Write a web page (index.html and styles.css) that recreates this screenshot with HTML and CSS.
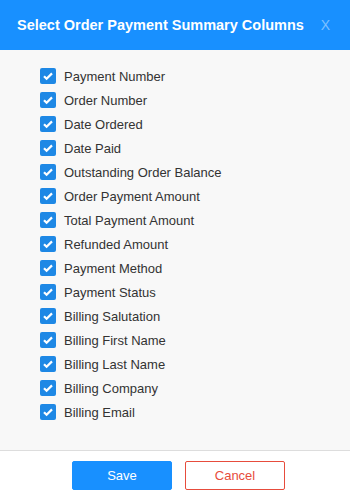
FILE: index.html
```html
<!DOCTYPE html>
<html>
<head>
<meta charset="utf-8">
<link rel="stylesheet" href="styles.css">
</head>
<body>
<div class="modal">
  <div class="header">
    <span class="title">Select Order Payment Summary Columns</span>
    <span class="close">X</span>
  </div>
  <div class="body">
    <ul class="list">
      <li><span class="cb"><svg viewBox="0 0 16 16" width="16" height="16"><path d="M4 8.2l2.6 2.6L12 5.4" fill="none" stroke="#fff" stroke-width="2.2"/></svg></span>Payment Number</li>
      <li><span class="cb"><svg viewBox="0 0 16 16" width="16" height="16"><path d="M4 8.2l2.6 2.6L12 5.4" fill="none" stroke="#fff" stroke-width="2.2"/></svg></span>Order Number</li>
      <li><span class="cb"><svg viewBox="0 0 16 16" width="16" height="16"><path d="M4 8.2l2.6 2.6L12 5.4" fill="none" stroke="#fff" stroke-width="2.2"/></svg></span>Date Ordered</li>
      <li><span class="cb"><svg viewBox="0 0 16 16" width="16" height="16"><path d="M4 8.2l2.6 2.6L12 5.4" fill="none" stroke="#fff" stroke-width="2.2"/></svg></span>Date Paid</li>
      <li><span class="cb"><svg viewBox="0 0 16 16" width="16" height="16"><path d="M4 8.2l2.6 2.6L12 5.4" fill="none" stroke="#fff" stroke-width="2.2"/></svg></span>Outstanding Order Balance</li>
      <li><span class="cb"><svg viewBox="0 0 16 16" width="16" height="16"><path d="M4 8.2l2.6 2.6L12 5.4" fill="none" stroke="#fff" stroke-width="2.2"/></svg></span>Order Payment Amount</li>
      <li><span class="cb"><svg viewBox="0 0 16 16" width="16" height="16"><path d="M4 8.2l2.6 2.6L12 5.4" fill="none" stroke="#fff" stroke-width="2.2"/></svg></span>Total Payment Amount</li>
      <li><span class="cb"><svg viewBox="0 0 16 16" width="16" height="16"><path d="M4 8.2l2.6 2.6L12 5.4" fill="none" stroke="#fff" stroke-width="2.2"/></svg></span>Refunded Amount</li>
      <li><span class="cb"><svg viewBox="0 0 16 16" width="16" height="16"><path d="M4 8.2l2.6 2.6L12 5.4" fill="none" stroke="#fff" stroke-width="2.2"/></svg></span>Payment Method</li>
      <li><span class="cb"><svg viewBox="0 0 16 16" width="16" height="16"><path d="M4 8.2l2.6 2.6L12 5.4" fill="none" stroke="#fff" stroke-width="2.2"/></svg></span>Payment Status</li>
      <li><span class="cb"><svg viewBox="0 0 16 16" width="16" height="16"><path d="M4 8.2l2.6 2.6L12 5.4" fill="none" stroke="#fff" stroke-width="2.2"/></svg></span>Billing Salutation</li>
      <li><span class="cb"><svg viewBox="0 0 16 16" width="16" height="16"><path d="M4 8.2l2.6 2.6L12 5.4" fill="none" stroke="#fff" stroke-width="2.2"/></svg></span>Billing First Name</li>
      <li><span class="cb"><svg viewBox="0 0 16 16" width="16" height="16"><path d="M4 8.2l2.6 2.6L12 5.4" fill="none" stroke="#fff" stroke-width="2.2"/></svg></span>Billing Last Name</li>
      <li><span class="cb"><svg viewBox="0 0 16 16" width="16" height="16"><path d="M4 8.2l2.6 2.6L12 5.4" fill="none" stroke="#fff" stroke-width="2.2"/></svg></span>Billing Company</li>
      <li><span class="cb"><svg viewBox="0 0 16 16" width="16" height="16"><path d="M4 8.2l2.6 2.6L12 5.4" fill="none" stroke="#fff" stroke-width="2.2"/></svg></span>Billing Email</li>
    </ul>
  </div>
  <div class="footer">
    <button class="btn save">Save</button>
    <button class="btn cancel">Cancel</button>
  </div>
</div>
</body>
</html>
```
FILE: styles.css
```css
* { box-sizing: border-box; }
html, body { margin: 0; padding: 0; }
body {
  font-family: "Liberation Sans", Arial, sans-serif;
  background: #fff;
  width: 350px;
  height: 500px;
  overflow: hidden;
}
.modal { display: flex; flex-direction: column; height: 500px; }
.header {
  height: 50px;
  background: #1890ff;
  display: flex;
  align-items: center;
  justify-content: space-between;
  padding: 0 20px 0 17px;
}
.title {
  color: #fff;
  font-weight: bold;
  font-size: 14.5px;
}
.close {
  color: rgba(255,255,255,0.45);
  font-size: 14px;
}
.body {
  background: #f8f8f8;
  height: 400px;
  padding: 14px 0 0 40px;
}
.list { list-style: none; margin: 0; padding: 0; }
.list li {
  height: 24px;
  display: flex;
  align-items: center;
  font-size: 13px;
  color: #333;
}
.cb {
  width: 16px;
  height: 16px;
  background: #1e88e5;
  border-radius: 2px;
  margin-right: 8px;
  display: flex;
}
.footer {
  border-top: 1px solid #ddd;
  height: 50px;
  display: flex;
  justify-content: center;
  gap: 13px;
  padding: 10px 0 0 7px;
}
.btn {
  width: 100px;
  height: 29px;
  font-family: "Liberation Sans", Arial, sans-serif;
  font-size: 13px;
  border-radius: 2px;
  padding: 0;
}
.save { background: #1890ff; color: #fff; border: 1px solid #1890ff; }
.cancel { background: #fff; color: #e74c3c; border: 1px solid #e74c3c; }
```
